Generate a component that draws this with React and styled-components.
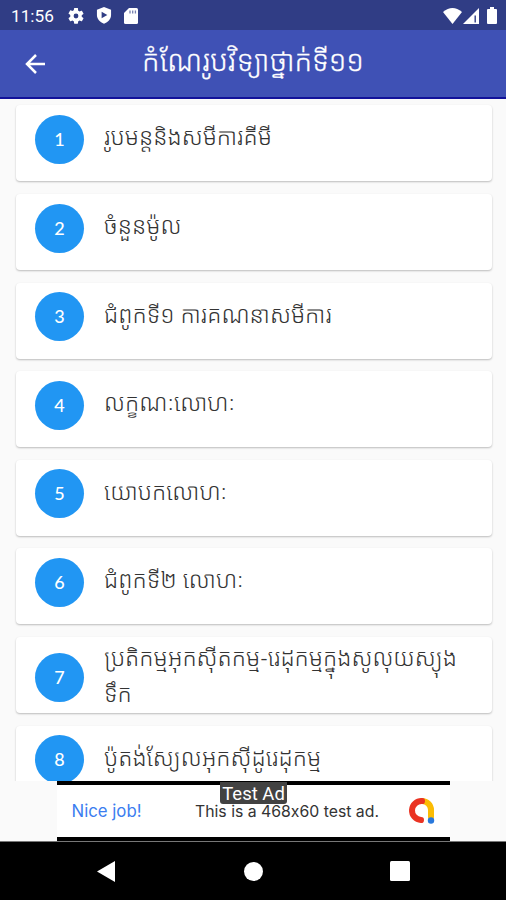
import React from "react";
import styled, { createGlobalStyle } from "styled-components";

const Global = createGlobalStyle`
  * { box-sizing: border-box; }
  body { margin: 0; background: #fafafa; }
`;
const khmer = `"Noto Sans Khmer", "Khmer OS", "Noto Sans", "DejaVu Sans", sans-serif`;

const Screen = styled.div`
  width: 506px; height: 900px; overflow: hidden;
  display: flex; flex-direction: column;
  background: #fafafa; font-family: Roboto, sans-serif;
`;
const StatusBar = styled.header`
  flex: 0 0 30px; background: #303d85; color: #fff;
  display: flex; align-items: center; justify-content: space-between;
  padding: 1px 8px 0 11px;
`;
const StatusGroup = styled.div`
  display: flex; align-items: center; gap: ${(p) => p.$gap}px;
`;
const Clock = styled.span`
  font-size: 17.2px; width: 43px; margin-right: 2px; line-height: 28px; white-space: nowrap;
`;
const AppBar = styled.div`
  flex: 0 0 69px; background: #3f51b5; border-bottom: 2px solid #12129a;
  display: grid; grid-template-columns: 70px 1fr 70px; align-items: center; color: #fff;
`;
const BackButton = styled.button`
  border: 0; padding: 0; background: none; color: inherit; display: flex; justify-content: center;
`;
const Title = styled.h1`
  margin: 0; padding-bottom: 8px; font: 300 28.6px/59px ${khmer};
  -webkit-text-stroke: 0.3px #fff;
  text-align: center; white-space: nowrap;
`;
const List = styled.main`
  flex: 0 0 682px; overflow: hidden; padding: 6.4px 14px 0 16px;
  display: flex; flex-direction: column; gap: 12.6px;
`;
const Card = styled.article`
  flex: 0 0 76px; background: #fff; border-radius: 4px;
  box-shadow: 0 1px 2px rgba(0,0,0,.25);
  display: flex; align-items: flex-start; padding: 0 20px 0 19px; gap: 20px;
`;
const Badge = styled.div`
  flex: 0 0 49px; height: 49px; border-radius: 50%; margin-top: ${(p) => (p.$tall ? 16 : 9.6)}px;
  background: #2196f3; color: #fff; display: flex; align-items: center; justify-content: center;
  font: 500 18px Lato, sans-serif; padding-bottom: 1px;
`;
const Label = styled.div`
  flex: 1; padding-top: ${(p) => (p.$tall ? 2 : 13)}px; color: #333;
  font: 300 23.15px/36px ${khmer};
  white-space: nowrap;
`;
const Line = styled.span`display: block;`;
const AdSlot = styled.aside`
  flex: 0 0 61px; display: flex; justify-content: center; background: #fafafa;
  border-bottom: 1px solid #777; padding-left: 1px;
`;
const Ad = styled.div`
  position: relative; width: 393px; height: 60px; background: #fff; color: #333;
  border-top: 4px solid #000; border-bottom: 4px solid #000;
  display: grid; grid-template-columns: 123px 212px 58px; align-items: center;
  font: 400 16px Inter, sans-serif;
`;
const AdLead = styled.span`color: #3b7df0; padding-left: 14.5px; font-size: 16.8px; white-space: nowrap;`;
const AdCopy = styled.span`padding-left: 15px; font-size: 15.8px; white-space: nowrap; font-feature-settings: "calt" 0;`;
const AdTag = styled.div`
  position: absolute; top: -3px; left: 163px; width: 67px; height: 22px;
  background: #424242; color: #fff; border-radius: 0 0 3px 3px;
  font: 400 18.5px/24px Roboto, sans-serif; text-align: center; white-space: nowrap;
`;
const AdLogo = styled.svg`margin-left: 16px;`;
const NavBar = styled.nav`
  flex: 1; background: #000; display: grid;
  grid-template-columns: 1fr 81px 1fr; align-items: center; justify-items: center;
`;
const NavButton = styled.button`
  border: 0; padding: 0; background: none; display: flex; justify-self: ${(p) => p.$side};
  margin: 0 97px;
  ${(p) => p.$side === "center" && "margin: 0 0 0 1px;"}
`;

const items = [
  ["រូបមន្តនិងសមីការគីមី"],
  ["ចំនួនម៉ូល"],
  ["ជំពូកទី១ ការគណនាសមីការ"],
  ["លក្ខណៈលោហៈ"],
  ["យោបកលោហៈ"],
  ["ជំពូកទី២ លោហៈ"],
  ["ប្រតិកម្មអុកស៊ីតកម្ម-រេដុកម្មក្នុងសូលុយស្យុង", "ទឹក"],
  ["ប៉ូតង់ស្យែលអុកស៊ីដូរេដុកម្ម"],
];

export default function App() {
  return (
    <Screen>
      <Global />
      <StatusBar>
        <StatusGroup $gap={12}>
          <Clock>11:56</Clock>
          <svg width="16" height="16" viewBox="2 2 20 20" fill="#fff"><path d="M19.14 12.94c.04-.3.06-.61.06-.94s-.02-.64-.07-.94l2.03-1.58a.5.5 0 0 0 .12-.61l-1.92-3.32a.5.5 0 0 0-.59-.22l-2.39.96a7 7 0 0 0-1.62-.94l-.36-2.54A.5.5 0 0 0 13.92 2h-3.84a.5.5 0 0 0-.47.41l-.36 2.54a7 7 0 0 0-1.62.94l-2.39-.96a.5.5 0 0 0-.59.22L2.74 8.47a.5.5 0 0 0 .12.61l2.03 1.58a7 7 0 0 0 0 2.28l-2.03 1.58a.5.5 0 0 0-.12.61l1.92 3.32c.12.22.37.29.59.22l2.39-.96c.5.38 1.03.7 1.62.94l.36 2.54c.05.24.24.41.48.41h3.84c.24 0 .44-.17.47-.41l.36-2.54a7 7 0 0 0 1.62-.94l2.39.96c.22.08.47 0 .59-.22l1.92-3.32a.5.5 0 0 0-.12-.61zM12 15a3 3 0 1 1 0-6 3 3 0 0 1 0 6z" /></svg>
          <svg width="16" height="17" viewBox="0 0 17 18"><path fill="#fff" d="M8.5 0 16 3v5.5c0 4-3 7.700-7.500 9.300C4 16.200 1 12.500 1 8.500V3z" /><path fill="#303d85" d="M6 5v7l6-3.500z" /></svg>
          <svg width="14" height="16" viewBox="0 0 14 16"><path fill="#fff" d="M5 0h7.500Q14 0 14 1.500v13q0 1.500-1.500 1.500h-11Q0 16 0 14.500V5z" /><path stroke="#7680b0" strokeWidth="1.300" d="M6 2.500v3M8.700 2.500v3M11.400 2.500v3" /></svg>
        </StatusGroup>
        <StatusGroup $gap={1}>
          <svg width="19" height="16" viewBox="0 0 19 16"><path fill="#fff" d="M0 4Q9.500-4 19 4L9.500 16z" /></svg>
          <svg width="17" height="16" viewBox="0 0 17 16"><path fill="#fff" d="M0 16 16 0v16z" /><path fill="#303d85" d="M11.500 7.500h1.400v7h-1.400z" /></svg>
          <svg width="17" height="17" viewBox="0 0 17 17"><path fill="#fff" d="M9 0h4v2h2q1 0 1 1v13q0 1-1 1H7q-1 0-1-1V3q0-1 1-1h2z" /></svg>
        </StatusGroup>
      </StatusBar>
      <AppBar>
        <BackButton aria-label="Back">
          <svg width="20" height="20" viewBox="0 0 20 20" fill="none" stroke="#fff" strokeWidth="2.500"><path d="M20 10H2M11 1 2 10l9 9" /></svg>
        </BackButton>
        <Title>កំណែរូបវិទ្យាថ្នាក់ទី១១</Title>
      </AppBar>
      <List>
        {items.map((lines, i) => {
          const tall = lines.length > 1;
          return (
            <Card key={i}>
              <Badge $tall={tall}>{i + 1}</Badge>
              <Label $tall={tall}>
                {lines.map((line) => <Line key={line}>{line}</Line>)}
              </Label>
            </Card>
          );
        })}
      </List>
      <AdSlot>
        <Ad>
          <AdLead>Nice job!</AdLead>
          <AdCopy>This is a 468x60 test ad.</AdCopy>
          <AdLogo width="28" height="28" viewBox="0 0 28 28" fill="none" strokeLinecap="round" strokeWidth="6">
            <path stroke="#fbbc04" d="M14 4a9 9 0 0 1 9 9v7" />
            <path stroke="#ea3323" d="M14 4a9.500 9.500 0 1 0-1 19" />
            <circle cx="23" cy="23.500" r="3.200" fill="#2878dc" />
          </AdLogo>
          <AdTag>Test Ad</AdTag>
        </Ad>
      </AdSlot>
      <NavBar>
        <NavButton $side="start" aria-label="Back"><svg width="18" height="21" viewBox="0 0 19 22"><path fill="#fff" d="M19 0v22L0 11z" /></svg></NavButton>
        <NavButton $side="center" aria-label="Home"><svg width="19" height="19" viewBox="0 0 19 19"><circle cx="9.500" cy="9.500" r="9.500" fill="#fff" /></svg></NavButton>
        <NavButton $side="end" aria-label="Recents"><svg width="20" height="20" viewBox="0 0 20 20"><rect width="20" height="20" rx="1.500" fill="#fff" /></svg></NavButton>
      </NavBar>
    </Screen>
  );
}
